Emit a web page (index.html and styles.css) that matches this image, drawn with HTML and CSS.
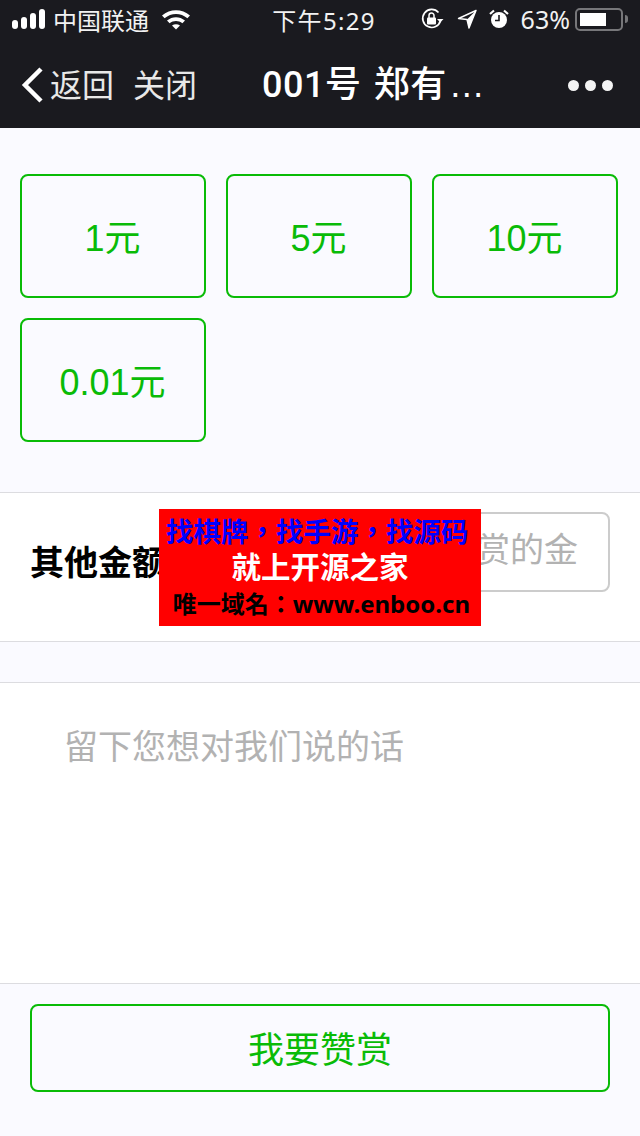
FILE: index.html
```html
<!DOCTYPE html>
<html>
  <head>
    <meta charset="UTF-8" />
    <title>赞赏</title>
    <link rel="stylesheet" href="styles.css">
  </head>
  <body>
    <div class="header">
      <div class="status">
        <div class="status-left">
          <span class="signal"><i class="b1"></i><i class="b2"></i><i class="b3"></i><i class="b4"></i></span>
          <span class="carrier">中国联通</span>
          <svg class="wifi" width="30" height="22" viewBox="0 0 30 22">
            <path d="M1 7.500C9 .5 21 .5 29 7.500l-2.600 2.800C19.800 4.600 10.200 4.600 3.600 10.300z" fill="#fff"/>
            <path d="M6 12.500c5.300-4.500 12.700-4.500 18 0l-2.600 2.800c-3.800-3.100-9-3.100-12.800 0z" fill="#fff"/>
            <path d="M11 17.500c2.400-1.800 5.600-1.800 8 0L15 21.500z" fill="#fff"/>
          </svg>
        </div>
        <div class="clock">下午5:29</div>
        <div class="status-right">
          <svg class="ic-lock" width="24" height="22" viewBox="0 0 24 22">
            <path d="M19.500 12.500A9 9 0 1 1 17.500 4.500" fill="none" stroke="#fff" stroke-width="1.700"/>
            <path d="M16 11l6.500 0-3.200 3.600z" fill="#fff"/>
            <rect x="6" y="9.500" width="9" height="7" rx="1" fill="#fff"/>
            <path d="M8 10V7.500a2.500 2.500 0 0 1 5 0V10" fill="none" stroke="#fff" stroke-width="1.500"/>
          </svg>
          <svg class="ic-loc" width="20" height="20" viewBox="0 0 20 20">
            <path d="M19 1.500L1.500 9.500l8.500 1 2 8.500z" fill="none" stroke="#fff" stroke-width="1.400" stroke-linejoin="round"/>
            <path d="M19 1.500L10 10.500l2 8.500z" fill="#fff"/>
          </svg>
          <svg class="ic-alarm" width="20" height="20" viewBox="0 0 20 20">
            <circle cx="10" cy="11" r="8" fill="#fff"/>
            <path d="M10 6v5.500H6" fill="none" stroke="#1a1a1f" stroke-width="1.600"/>
            <path d="M1 5l4-3.500M19 5l-4-3.500" stroke="#fff" stroke-width="2.200"/>
          </svg>
          <span class="pct">63%</span>
          <span class="battery"><span class="fill"></span></span>
          <span class="nub"></span>
        </div>
      </div>
      <div class="nav">
        <div class="nav-left">
          <svg class="back" width="24" height="36" viewBox="0 0 24 36">
            <path d="M21 2L5 18l16 16" fill="none" stroke="#fff" stroke-width="4.500"/>
          </svg>
          <span class="nav-txt">返回</span>
          <span class="nav-txt close">关闭</span>
        </div>
        <div class="title">001号 郑有<span class="dots">…</span></div>
        <div class="more"><i></i><i></i><i></i></div>
      </div>
    </div>

    <div class="amounts">
      <div class="amt">1元</div>
      <div class="amt">5元</div>
      <div class="amt">10元</div>
      <div class="amt">0.01元</div>
    </div>

    <div class="other">
      <span class="other-label">其他金额</span>
      <div class="other-input">请输入赞赏的金</div>
    </div>

    <div class="message">留下您想对我们说的话</div>

    <div class="footer">
      <div class="submit">我要赞赏</div>
    </div>

    <div class="ad">
      <div class="ad1">找棋牌，找手游，找源码</div>
      <div class="ad2">就上开源之家</div>
      <div class="ad3">唯一域名：www.enboo.cn</div>
    </div>
  </body>
</html>
```

FILE: styles.css
```css
* {
  box-sizing: border-box;
}
body {
  margin: 0;
  width: 640px;
  height: 1136px;
  position: relative;
  overflow: hidden;
  background: #fafaff;
  font-family: "Liberation Sans", "Noto Sans CJK SC", sans-serif;
}
.header {
  background: #1a1a1f;
  color: #fff;
  height: 128px;
}
.status {
  height: 40px;
  padding-bottom: 2px;
  display: grid;
  grid-template-columns: 1fr auto 1fr;
  align-items: center;
  font-family: "Noto Sans", "Noto Sans CJK SC", sans-serif;
  font-size: 24px;
  color: #f2f2f2;
}
.status-left {
  display: flex;
  align-items: center;
  padding-left: 12px;
}
.signal {
  display: flex;
  align-items: flex-end;
  gap: 3px;
  height: 20px;
}
.signal i {
  display: block;
  width: 6px;
  background: #fff;
  border-radius: 3px;
}
.b1 { height: 9px; }
.b2 { height: 12px; }
.b3 { height: 16px; }
.b4 { height: 20px; }
.carrier {
  margin-left: 8px;
}
.wifi {
  margin-left: 12px;
}
.clock {
  padding-left: 8px;
  letter-spacing: 1.300px;
}
.status-right {
  display: flex;
  align-items: center;
  justify-content: flex-end;
  padding-right: 12px;
}
.ic-loc {
  margin-left: 12px;
}
.ic-alarm {
  margin-left: 12px;
}
.pct {
  margin-left: 12px;
  font-size: 25px;
}
.battery {
  display: block;
  width: 48px;
  height: 23px;
  margin-left: 5px;
  padding: 3px;
  border: 2px solid #77777a;
  border-radius: 5px;
}
.fill {
  display: block;
  width: 26px;
  height: 100%;
  background: #fff;
}
.nub {
  display: block;
  width: 3px;
  height: 8px;
  margin-left: 2px;
  background: #77777a;
  border-radius: 0 3px 3px 0;
}
.nav {
  height: 88px;
  display: grid;
  grid-template-columns: 242px 1fr auto;
  align-items: center;
  padding: 0 27px 6px 20px;
}
.nav-left {
  display: flex;
  align-items: center;
  padding-top: 4px;
  white-space: nowrap;
}
.back {
  flex: none;
  margin: 4px 6px 0 0;
}
.nav-txt {
  font-size: 32px;
  color: #e8e8e8;
  font-family: "Noto Sans CJK SC", sans-serif;
  font-weight: 400;
}
.close {
  margin-left: 19px;
}
.title {
  font-size: 36px;
  font-weight: 500;
  font-family: "Roboto", "Noto Sans CJK SC", sans-serif;
  letter-spacing: 0.500px;
  word-spacing: 3px;
  white-space: nowrap;
}
.dots {
  font-family: "Liberation Sans", sans-serif;
  font-weight: 400;
  margin-left: 2px;
}
.more {
  display: flex;
  justify-content: flex-end;
  gap: 6px;
  padding-top: 8px;
}
.more i {
  display: block;
  width: 11px;
  height: 11px;
  border-radius: 50%;
  background: #f4f4f4;
}
.amounts {
  height: 365px;
  padding: 46px 22px 0 20px;
  display: grid;
  grid-template-columns: repeat(3, 186px);
  grid-auto-rows: 124px;
  gap: 20px;
  border-bottom: 1px solid #dcdce0;
}
.amt {
  border: 2px solid #09bb07;
  border-radius: 8px;
  display: flex;
  align-items: center;
  justify-content: center;
  color: #09bb07;
  font-size: 36px;
  padding: 0 1px 3px 0;
}
.other {
  height: 149px;
  background: #fff;
  border-bottom: 1px solid #dcdce0;
  display: flex;
  align-items: flex-start;
  justify-content: space-between;
  padding: 19px 30px 0;
}
.other-label {
  font-size: 34px;
  line-height: 98px;
  font-weight: 700;
  color: #000;
  font-family: "Noto Sans CJK SC", sans-serif;
}
.other-input {
  width: 290px;
  height: 80px;
  border: 2px solid #ccc;
  border-radius: 8px;
  font-size: 34px;
  color: #b2b2b2;
  display: flex;
  align-items: center;
  justify-content: flex-end;
  padding: 0 30px 10px 0;
  overflow: hidden;
  white-space: nowrap;
  font-family: "Noto Sans CJK SC", sans-serif;
}
.message {
  height: 302px;
  margin-top: 40px;
  background: #fff;
  border-top: 1px solid #dcdce0;
  border-bottom: 1px solid #dcdce0;
  padding: 37px 0 0 64px;
  font-size: 34px;
  color: #b2b2b2;
  font-family: "Noto Sans CJK SC", sans-serif;
}
.footer {
  padding: 20px 30px;
}
.submit {
  height: 88px;
  border: 2px solid #09bb07;
  border-radius: 8px;
  display: flex;
  align-items: center;
  justify-content: center;
  color: #09bb07;
  font-size: 36px;
  padding-bottom: 2px;
  font-family: "Noto Sans CJK SC", sans-serif;
}
.ad {
  position: absolute;
  left: 159px;
  top: 509px;
  width: 322px;
  height: 117px;
  background: #f00;
  font-family: "Noto Sans", "Noto Sans CJK TC", sans-serif;
  font-weight: 700;
  white-space: nowrap;
}
.ad1 {
  color: #00f;
  font-size: 27.500px;
  line-height: 38px;
  padding-left: 7px;
  margin-top: 4px;
}
.ad2 {
  color: #fff;
  font-size: 29.500px;
  line-height: 38px;
  text-align: center;
  margin-top: -3px;
}
.ad3 {
  color: #000;
  font-size: 24px;
  line-height: 36px;
  text-align: right;
  padding-right: 11px;
}
```
